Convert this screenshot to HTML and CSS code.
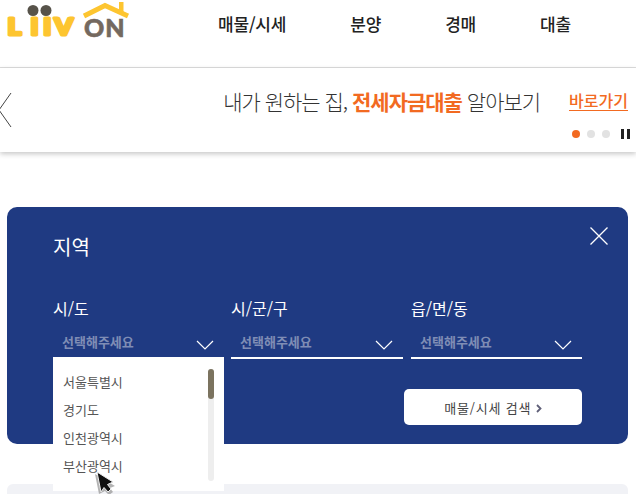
FILE: index.html
```html
<!DOCTYPE html>
<html lang="ko">
  <head>
    <meta charset="utf-8">
    <title>Liiv ON</title>
    <meta name="viewport" content="width=device-width, initial-scale=1">
    <link rel="stylesheet" href="styles.css">
  </head>
  <body>
    <header class="top">
      <svg class="logo" width="132" height="42" viewBox="0 0 132 42">
        <circle cx="33" cy="10.5" r="5.5" fill="#57534a"/>
        <circle cx="46" cy="10.5" r="5.5" fill="#57534a"/>
        <text class="logo-liiv" transform="scale(1.2 1)" x="6.2 25.4 36 45.5" y="35.5">LIIV</text>
        <path d="M84 16 L105 5.5 L128 16" fill="none" stroke="#fdc530" stroke-width="5"/>
        <path d="M119 2 H123.5 V12 H119 Z" fill="#fdc530"/>
        <text class="logo-on" x="84" y="37">ON</text>
      </svg>
      <nav class="menu">
        <a class="menu-item">매물/시세</a>
        <a class="menu-item">분양</a>
        <a class="menu-item">경매</a>
        <a class="menu-item">대출</a>
      </nav>
    </header>

    <section class="banner">
      <svg class="banner-prev" width="14" height="36" viewBox="0 0 14 36">
        <path d="M11 1 L-1 18 L11 35" fill="none" stroke="#444" stroke-width="1"/>
      </svg>
      <p class="banner-text">내가 원하는 집, <b>전세자금대출</b> 알아보기</p>
      <a class="banner-link">바로가기</a>
      <div class="pager">
        <i class="dot on"></i>
        <i class="dot"></i>
        <i class="dot"></i>
        <i class="pause"></i>
      </div>
    </section>

    <section class="panel">
      <h2 class="panel-title">지역</h2>
      <svg class="panel-close" width="20" height="20" viewBox="0 0 20 20">
        <path d="M1.5 1.5 L18.5 18.5 M18.5 1.5 L1.5 18.5" stroke="#fff" stroke-width="1.3"/>
      </svg>
      <div class="fields">
        <div class="field">
          <label class="field-label">시/도</label>
          <div class="select open">
            <span>선택해주세요</span>
            <svg class="chev" width="18" height="10" viewBox="0 0 18 10"><path d="M1 1 L9 9 L17 1" fill="none" stroke="#fff" stroke-width="1.2"/></svg>
            <div class="dropdown">
              <ul class="options">
                <li>서울특별시</li>
                <li>경기도</li>
                <li>인천광역시</li>
                <li>부산광역시</li>
              </ul>
              <div class="scroll"><div class="thumb"></div></div>
            </div>
          </div>
        </div>
        <div class="field">
          <label class="field-label">시/군/구</label>
          <div class="select">
            <span>선택해주세요</span>
            <svg class="chev" width="18" height="10" viewBox="0 0 18 10"><path d="M1 1 L9 9 L17 1" fill="none" stroke="#fff" stroke-width="1.2"/></svg>
          </div>
        </div>
        <div class="field">
          <label class="field-label">읍/면/동</label>
          <div class="select">
            <span>선택해주세요</span>
            <svg class="chev" width="18" height="10" viewBox="0 0 18 10"><path d="M1 1 L9 9 L17 1" fill="none" stroke="#fff" stroke-width="1.2"/></svg>
          </div>
        </div>
      </div>
      <div class="actions">
        <button type="button" class="search">매물/시세 검색
          <svg width="6" height="9" viewBox="0 0 6 9"><path d="M1 1 L4.5 4.5 L1 8" fill="none" stroke="#5f5f78" stroke-width="1.8"/></svg>
        </button>
      </div>
    </section>

    <div class="next"></div>

    <svg class="cursor" width="26" height="28" viewBox="0 0 26 28">
      <path d="M3 6 L7 26 L13 23 L17 27 L21 24 L18 20 L23 18 Z" fill="#999" opacity=".75"/>
      <path d="M5 4 L21 14 L15.5 16.5 L19 21 L16 24 L12 19.5 L9 24 Z" fill="#111" stroke="#eee" stroke-width="1" stroke-linejoin="round"/>
    </svg>
  </body>
</html>
```

FILE: styles.css
```css
html, body {
  margin: 0;
  height: 494px;
  overflow: hidden;
}
body {
  position: relative;
  background: #fff;
  font-family: "Noto Sans CJK KR", "Noto Sans", sans-serif;
  color: #333;
}
.top {
  display: flex;
  height: 67px;
  border-bottom: 1px solid #ddd;
}
.logo {
  flex: none;
  display: block;
}
.logo-liiv {
  font: 900 22px "Lato", sans-serif;
  fill: #fdc530;
  stroke: #fdc530;
  stroke-width: 3;
  stroke-linejoin: round;
}
.logo-on {
  font: 900 25px "Lato", sans-serif;
  fill: #74695f;
  stroke: #74695f;
  stroke-width: .6;
  letter-spacing: 1px;
}
.menu {
  display: flex;
  gap: 64px;
  margin-left: 86px;
  padding-top: 12px;
}
.menu-item {
  font-size: 17px;
  font-weight: 500;
  line-height: 24px;
  color: #222;
  letter-spacing: -.2px;
}
.banner {
  position: relative;
  height: 84px;
  background: #fff;
  box-shadow: 0 2px 5px rgba(0, 0, 0, .22);
  display: flex;
  justify-content: flex-end;
  padding-top: 19px;
  padding-right: 8px;
  box-sizing: border-box;
}
.banner-prev {
  position: absolute;
  left: 0;
  top: 24px;
}
.banner-text {
  margin: 0 29px 0 0;
  font-size: 21px;
  line-height: 28px;
  letter-spacing: -1px;
  color: #333;
  font-weight: 300;
}
.banner-text b {
  color: #f26a21;
  font-weight: 700;
}
.banner-link {
  align-self: flex-start;
  font-size: 16px;
  font-weight: 500;
  line-height: 20px;
  margin-top: 3px;
  color: #f26a21;
  border-bottom: 1px solid #f26a21;
}
.pager {
  position: absolute;
  right: 6px;
  top: 61px;
  display: flex;
  align-items: center;
  gap: 7px;
}
.dot {
  width: 8px;
  height: 8px;
  border-radius: 50%;
  background: #e2e2e2;
}
.dot.on {
  background: #f26a21;
}
.pause {
  width: 9px;
  height: 10px;
  margin-left: 4px;
  border-left: 3px solid #222;
  border-right: 3px solid #222;
  box-sizing: border-box;
}
.panel {
  position: relative;
  margin: 55px 8px 0 7px;
  height: 237px;
  box-sizing: border-box;
  padding: 26px 46px 0;
  background: #1f3a82;
  border-radius: 10px;
  color: #fff;
}
.panel-title {
  margin: 0;
  font-size: 20px;
  font-weight: 400;
  line-height: 28px;
}
.panel-close {
  position: absolute;
  right: 19px;
  top: 19px;
}
.fields {
  display: flex;
  gap: 7px;
  margin-top: 35px;
}
.field {
  width: 172px;
}
.field:first-child {
  width: 171px;
}
.field:last-child {
  width: 171px;
  margin-left: 1px;
}
.field-label {
  display: block;
  font-size: 16px;
  line-height: 24px;
}
.select {
  position: relative;
  display: flex;
  justify-content: space-between;
  align-items: center;
  height: 37px;
  padding: 0 10px 0 9px;
  box-sizing: border-box;
  border-bottom: 2px solid #fff;
  margin-top: 2px;
}
.select span {
  font-size: 13px;
  font-weight: 700;
  line-height: 18px;
  color: #7f8db5;
  margin-top: 5px;
}
.chev {
  margin-top: 10px;
}
.dropdown {
  position: absolute;
  left: 0;
  right: 0;
  top: 35px;
  height: 134px;
  background: #fff;
  display: flex;
  justify-content: space-between;
  padding: 11px 10px 10px;
  box-sizing: border-box;
  z-index: 2;
}
.options {
  list-style: none;
  margin: 0;
  padding: 0;
  font-size: 13px;
  line-height: 28px;
  color: #555;
}
.scroll {
  width: 6px;
  height: 112px;
  margin-top: 1px;
  background: #eee;
  border-radius: 3px;
}
.thumb {
  height: 30px;
  background: #7b735f;
  border-radius: 3px;
}
.actions {
  display: flex;
  justify-content: flex-end;
  margin-top: 30px;
}
.search {
  width: 178px;
  height: 36px;
  border: 0;
  border-radius: 5px;
  background: #fff;
  font-family: inherit;
  font-size: 13px;
  letter-spacing: .8px;
  color: #444;
}
.next {
  height: 20px;
  margin: 40px 8px 0 7px;
  background: #f1f2f6;
  border-radius: 6px 6px 0 0;
}
.cursor {
  position: absolute;
  left: 92px;
  top: 468px;
  z-index: 3;
}
```
